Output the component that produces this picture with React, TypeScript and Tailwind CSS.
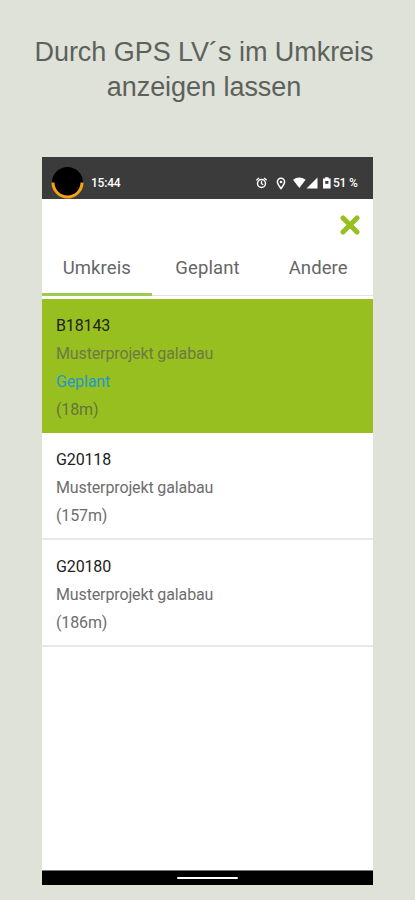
// App.tsx
const projects = [
  { id: 'B18143', name: 'Musterprojekt galabau', status: 'Geplant', distance: '(18m)' },
  { id: 'G20118', name: 'Musterprojekt galabau', distance: '(157m)' },
  { id: 'G20180', name: 'Musterprojekt galabau', distance: '(186m)' },
];

const tabs = ['Umkreis', 'Geplant', 'Andere'];

const StatusBar = () => {
  return (
    <div className="flex h-[42px] bg-[#3b3b3b] text-white">
      <svg className="ml-[9px] mt-2 h-[34px] w-[34px] shrink-0" viewBox="0 0 34 34" fill="none">
        <circle cx="16.5" cy="17.5" r="15.5" fill="#000" />
        <path d="M2 17.5a14.5 14.5 0 0 0 29 0" stroke="#f5a214" strokeWidth="3" />
      </svg>
      <span className="ml-[6px] mt-[19px] text-[12px] leading-[15px] font-medium tracking-[-0.2px]">15:44</span>
      {/* Alarm, location, wifi, signal, battery */}
      <svg className="ml-auto mt-[18px] h-4 w-[78px] shrink-0" viewBox="255 175 78 16" fill="none" stroke="#fff">
        <circle cx="261.5" cy="183.5" r="4" strokeWidth="1.5" />
        <path d="M261.5 181v2.7l1.8 1M256.3 180.2l2.7-2.3M266.7 180.2l-2.7-2.3" strokeWidth="1.3" />
        <path d="M281 188.5c-2.2-2.9-3.6-4.5-3.6-6.7a3.6 3.6 0 0 1 7.2 0c0 2.2-1.4 3.8-3.6 6.7z" strokeWidth="1.5" />
        <circle cx="281" cy="182" r="1.3" fill="#fff" stroke="none" />
        <path d="M293 179.8q6.3-4.6 12.6 0l-6.3 8.2z" fill="#fff" stroke="none" />
        <path d="M317.5 177.5v11h-11z" fill="#fff" stroke="none" />
        <path d="M323 178.6h2v-1.4h3.6v1.4h2v9.9h-7.6z" fill="#fff" stroke="none" />
        <path d="M325.2 181h3.2v2.8h-3.2z" fill="#3b3b3b" stroke="none" />
      </svg>
      <span className="mr-[15px] mt-[19px] w-[25px] whitespace-nowrap text-[12px] leading-[15px] font-medium tracking-[-0.2px]">51 %</span>
    </div>
  );
};

const Tabs = () => {
  return (
    <div className="flex h-[45px] border-b border-[#e2e2e2]">
      {tabs.map((tab, i) => (
        <button
          key={tab}
          className={`flex-1 pb-[9px] text-[18.5px] leading-6 tracking-[0.1px] text-[#666] ${
            i === 0 ? '-mb-px border-b-[3px] border-[#9bcb50]' : 'mb-[2px] pl-px'
          }`}
        >
          {tab}
        </button>
      ))}
    </div>
  );
};

const App = () => {
  return (
    <div className="flex h-[900px] w-[415px] flex-col items-center bg-[#dfe2d9]">
      <h1 className="mt-[34px] h-[123px] pr-[7px] pt-px text-center font-['Liberation_Sans',sans-serif] text-[27px] leading-[35px] tracking-[-0.04px] text-[#5d615b]">
        Durch GPS LV´s im Umkreis
        <br />
        anzeigen lassen
      </h1>
      <div className="flex h-[728px] w-[331px] flex-col bg-white font-['Roboto',sans-serif]">
        <StatusBar />
        <div className="flex h-[52px] justify-end pr-[13px] pt-4">
          <svg className="h-5 w-5" viewBox="0 0 20 20" stroke="#97bf1f" strokeWidth="5" strokeLinecap="round">
            <path d="M3 3l14 14M17 3L3 17" />
          </svg>
        </div>
        <Tabs />
        <div className="mt-[3px] flex-1">
          {projects.map((project) => (
            <div
              key={project.id}
              className={`px-[14px] pt-[13px] text-base leading-[28px] tracking-[-0.13px] text-[#6d6d6d] ${
                project.status
                  ? 'h-[134px] bg-[#97bf1f]'
                  : 'h-[107px] border-b-2 border-[#e8e8e8]'
              }`}
            >
              <p className="text-[#222]">{project.id}</p>
              <p className={project.status ? 'text-[#6d7a45]' : ''}>{project.name}</p>
              {project.status && <p className="text-[#1f9bc8]">{project.status}</p>}
              <p className={project.status ? 'text-[#667240]' : ''}>{project.distance}</p>
            </div>
          ))}
        </div>
        <div className="flex h-[15px] items-center justify-center border-t border-[#777] bg-black">
          <div className="h-[2px] w-[61px] rounded-full bg-white" />
        </div>
      </div>
    </div>
  );
};

export default App;
